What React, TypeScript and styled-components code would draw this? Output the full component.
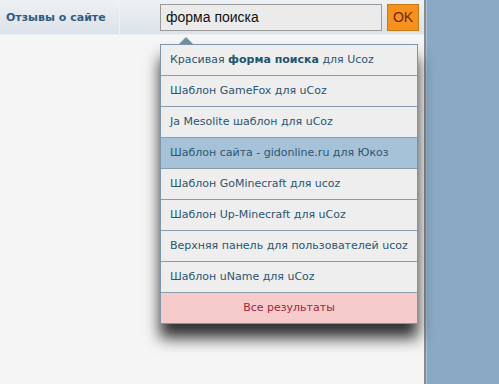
import React from 'react';
import styled, {createGlobalStyle} from 'styled-components';

const results = [
    'Шаблон GameFox для uCoz',
    'Ja Mesolite шаблон для uCoz',
    'Шаблон сайта - gidonline.ru для Юкоз',
    'Шаблон GoMinecraft для ucoz',
    'Шаблон Up-Minecraft для uCoz',
    'Верхняя панель для пользователей ucoz',
    'Шаблон uName для uCoz',
]
const ACTIVE = 2

const Global = createGlobalStyle`
  html, body {
    margin: 0;
    padding: 0;
    background: #f5f5f5;
  }
`

export default function App() {
    return (
        <>
            <Global/>
            <Page>
                <Main>
                    <Header>
                        <Title>Отзывы о сайте</Title>
                        <SearchForm>
                            <SearchInput defaultValue="форма поиска"/>
                            <OkButton>OK</OkButton>
                            <Dropdown>
                                <Arrow/>
                                <Item>Красивая <b>форма поиска</b> для Ucoz</Item>
                                {results.map((r, i) =>
                                    <Item key={r} active={i === ACTIVE}>{r}</Item>
                                )}
                                <AllResults>Все результаты</AllResults>
                            </Dropdown>
                        </SearchForm>
                    </Header>
                    <Content/>
                </Main>
                <Sidebar/>
            </Page>
        </>
    );
}

const Page = styled.div`
  display: flex;
  height: 384px;
  overflow: hidden;
`
const Main = styled.div`
  width: 424px;
  display: flex;
  flex-direction: column;
  border-right: 2px solid #8c8c8c;
`
const Header = styled.div`
  height: 34px;
  display: flex;
  align-items: center;
  background: linear-gradient(#eef1f4, #dbe2e9);
  border-bottom: 1px solid #eef0f2;
`
const Title = styled.div`
  width: 113px;
  height: 100%;
  padding-left: 6px;
  display: flex;
  align-items: center;
  border-right: 1px solid #eef2f5;
  font-family: "DejaVu Sans", sans-serif;
  font-weight: bold;
  font-size: 11px;
  color: #335c7e;
`
const SearchForm = styled.div`
  position: relative;
  display: flex;
  margin-left: 40px;
`
const SearchInput = styled.input`
  box-sizing: border-box;
  width: 222px;
  height: 27px;
  padding: 0 5px;
  border: 1px solid #9b9b9b;
  background: #ebebeb;
  font-family: "Liberation Sans", sans-serif;
  font-size: 14px;
  color: #111;
  outline: none;
`
const OkButton = styled.button`
  box-sizing: border-box;
  width: 32px;
  height: 27px;
  margin-left: 5px;
  padding: 0;
  border: 1px solid #c97a14;
  background: #f8911b;
  font-family: "Liberation Sans", sans-serif;
  font-size: 14px;
  color: #6a2a05;
`
const Dropdown = styled.div`
  position: absolute;
  left: 0;
  top: 40px;
  width: 256px;
  border: 1px solid #7d96a9;
  background: #eeeeee;
  box-shadow: 0 14px 14px rgba(0, 0, 0, 0.8);
  z-index: 2;
`
const Arrow = styled.div`
  position: absolute;
  left: 18px;
  top: -8px;
  width: 0;
  height: 0;
  border-left: 7px solid transparent;
  border-right: 7px solid transparent;
  border-bottom: 7px solid #6e8fa2;
`
const Item = styled.div<{ active?: boolean }>`
  height: 30px;
  line-height: 30px;
  padding-left: 9px;
  border-bottom: 1px solid #8d9caa;
  background: ${props => props.active ? '#a6c2d8' : '#eeeeee'};
  font-family: "DejaVu Sans", sans-serif;
  font-size: 11px;
  color: #2b5670;
  white-space: nowrap;

  b {
    color: #215570;
  }
`
const AllResults = styled.div`
  height: 30px;
  line-height: 30px;
  text-align: center;
  background: #f5cbcb;
  font-family: "DejaVu Sans", sans-serif;
  font-size: 11px;
  color: #a3283a;
`
const Content = styled.div`
  flex: 1;
  background: #f5f5f5;
`
const Sidebar = styled.div`
  flex: 1;
  background: #89a9c4;
  border-left: 1px solid #a3bdd2;
`
